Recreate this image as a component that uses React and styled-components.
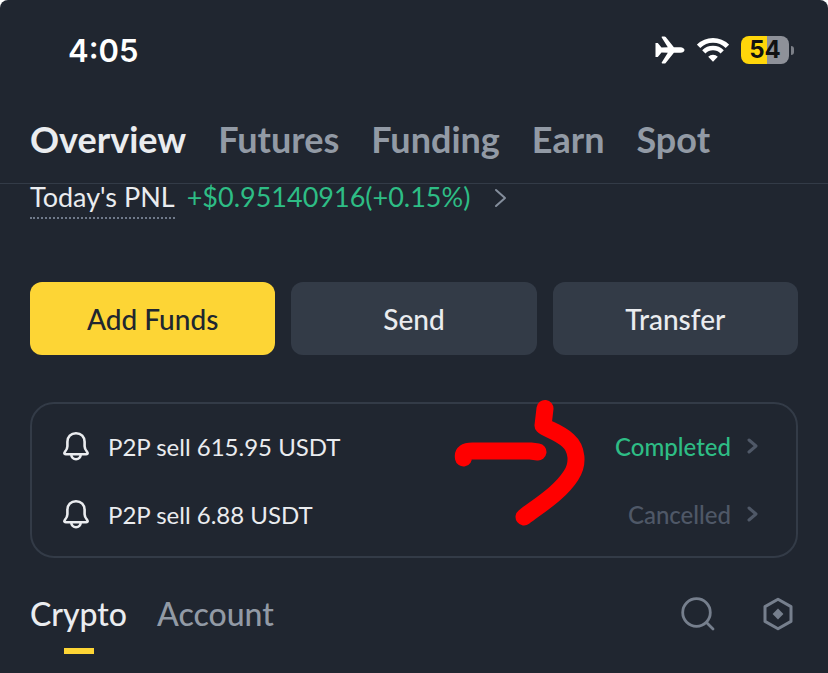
import React from 'react'
import styled, { createGlobalStyle } from 'styled-components'

const tabs = ['Overview', 'Futures', 'Funding', 'Earn', 'Spot']

const orders = [
	{ id: 1, title: 'P2P sell 615.95 USDT', status: 'Completed', done: true },
	{ id: 2, title: 'P2P sell 6.88 USDT', status: 'Cancelled', done: false },
]

const Chevron = ({ width, height, stroke }) => (
	<svg width={width} height={height} viewBox={`0 0 ${width} ${height}`} fill='none' aria-hidden='true'>
		<path
			d={`M2 2 L${width - 2} ${height / 2} L2 ${height - 2}`}
			stroke='currentColor'
			strokeWidth={stroke}
			strokeLinejoin='round'
			strokeLinecap='round'
		/>
	</svg>
)

const PlaneIcon = () => (
	<svg width='30' height='28' viewBox='0 0 30 28' fill='#fff' aria-hidden='true'>
		<path d='M.5 7h2.300l3.700 4.600 6.300-.4L6.700 1.400C6.500.9 6.800.5 7.300.5h2.200c.5 0 .9.2 1.200.6l8.200 10.100h6.600c2.200 0 4 1.500 4 2.800s-1.800 2.800-4 2.800h-6.600l-8.200 10.100c-.3.400-.7.600-1.200.6H7.300c-.5 0-.8-.4-.6-.9l6.100-9.800-6.300-.4L2.800 21H.5z' />
	</svg>
)

const WifiIcon = () => (
	<svg width='32' height='24' viewBox='0 0 32 24' fill='none' aria-hidden='true'>
		<path d='M1.6 8.4a20.4 20.4 0 0 1 28.8 0' stroke='#fff' strokeWidth='4.8' />
		<path d='M6.8 13.8a13 13 0 0 1 18.4 0' stroke='#fff' strokeWidth='4.6' />
		<path d='M11.2 18.800a6.8 6.8 0 0 1 9.6 0L16 23.800z' fill='#fff' />
	</svg>
)

const BellIcon = () => (
	<svg width='28' height='30' viewBox='0 0 28 30' fill='none' stroke='#eaecef' strokeWidth='2.6' aria-hidden='true'>
		<path d='M14 2.2c-5.2 0-8.600 3.600-8.600 8.600v4.400c0 2.200-.8 3.600-2.400 5.600-1 1.300-.9 2.500.7 2.500h20.600c1.600 0 1.700-1.200.7-2.500-1.600-2-2.400-3.400-2.400-5.600v-4.400c0-5-3.400-8.600-8.600-8.600z' strokeLinejoin='round' />
		<path d='M9.300 23.600a4.700 4.700 0 0 0 9.400 0' />
	</svg>
)

const SearchIcon = () => (
	<svg width='34' height='34' viewBox='0 0 34 34' fill='none' stroke='#767f8d' strokeWidth='2.8' aria-hidden='true'>
		<circle cx='15.5' cy='15.5' r='13.8' />
		<path d='M25.5 25.5L32 32' strokeLinecap='round' />
	</svg>
)

const HexIcon = () => (
	<svg width='30' height='34' viewBox='0 0 30 34' fill='none' aria-hidden='true'>
		<path d='M15 2.2L28 9.600v14.800L15 31.800 2 24.400V9.600z' stroke='#767f8d' strokeWidth='3' strokeLinejoin='round' />
		<path d='M15 11.600l5.400 5.400-5.400 5.400L9.600 17z' fill='#767f8d' />
	</svg>
)

const App = () => {
	return (
		<Page>
			<GlobalStyle />
			<Header>
				<StatusBar>
					<Time>4:05</Time>
					<StatusIcons>
						<PlaneIcon />
						<WifiIcon />
						<Battery>
							<BatteryBody>54</BatteryBody>
							<BatteryTip />
						</Battery>
					</StatusIcons>
				</StatusBar>
				<Nav>
					{tabs.map((tab) => (
						<NavTab key={tab} href='#' $active={tab === 'Overview'}>{tab}</NavTab>
					))}
				</Nav>
			</Header>

			<Main>
				<Pnl href='#'>
					<PnlLabel>Today's PNL</PnlLabel>
					<PnlValue>+$0.95140916(+0.15%)</PnlValue>
					<Chevron width={13} height={20} stroke={2} />
				</Pnl>

				<Actions>
					<ActionButton $primary>Add Funds</ActionButton>
					<ActionButton>Send</ActionButton>
					<ActionButton>Transfer</ActionButton>
				</Actions>

				<Card>
					{orders.map(({ id, title, status, done }) => (
						<Order key={id} href='#'>
							<BellIcon />
							<OrderTitle>{title}</OrderTitle>
							<OrderStatus $done={done}>{status}</OrderStatus>
							<Chevron width={11} height={16} stroke={3} />
						</Order>
					))}
					<Marker viewBox='0 0 132 128' aria-hidden='true'>
						<path d='M9.500 60c-1-5 2-7 9-7h58l7.500 1' />
						<path d='M91 10.500l-2 17c4 4 15 6 25 15 9 8 11 23 3 35-11 17-29 28-47 41.500' />
					</Marker>
				</Card>

				<Assets>
					<AssetTab $active>Crypto</AssetTab>
					<AssetTab>Account</AssetTab>
					<Tools>
						<IconButton aria-label='Search'><SearchIcon /></IconButton>
						<IconButton aria-label='Settings'><HexIcon /></IconButton>
					</Tools>
				</Assets>
			</Main>
		</Page>
	)
}

export default App

const GlobalStyle = createGlobalStyle`
	* {
		box-sizing: border-box;
	}

	body {
		margin: 0;
		background: #fff;
		font-family: Lato, 'Open Sans', sans-serif;
		color: #eaecef;
	}

	a {
		color: inherit;
		text-decoration: none;
	}

	button {
		padding: 0;
		border: none;
		background: none;
		font-family: inherit;
		color: inherit;
		cursor: pointer;
	}

	svg {
		display: block;
		flex-shrink: 0;
	}
`
const Page = styled.div`
	min-height: 100vh;
	border-radius: 8px 8px 0 0;
	background: #202630;
`
const Header = styled.header`
	border-bottom: 1px solid #333b47;
`
const StatusBar = styled.div`
	height: 100px;
	padding: 0 34px 0 68px;
	display: flex;
	align-items: center;
	justify-content: space-between;
`
const Time = styled.time`
	font-family: Inter, sans-serif;
	font-size: 31px;
	font-weight: 600;
	color: #fff;
`
const StatusIcons = styled.div`
	display: flex;
	align-items: center;
	gap: 12px;
`
const Battery = styled.div`
	display: flex;
	align-items: center;
	gap: 2px;
`
const BatteryBody = styled.span`
	width: 48px;
	height: 28px;
	border-radius: 8px;
	background: linear-gradient(90deg, #ffd60a 54%, #8e9199 54%);
	font-family: Inter, sans-serif;
	font-size: 24px;
	font-weight: 700;
	line-height: 28px;
	text-align: center;
	color: #111;
`
const BatteryTip = styled.span`
	width: 3px;
	height: 9px;
	border-radius: 0 4px 4px 0;
	background: #7b7f87;
`
const Nav = styled.nav`
	height: 83px;
	padding: 16px 30px 0;
	display: flex;
	align-items: flex-start;
	gap: 32px;
`
const NavTab = styled.a`
	font-size: 36px;
	font-weight: 700;
	line-height: 46px;
	color: ${({ $active }) => ($active ? '#eaecef' : '#929aa5')};
`
const Main = styled.main`
	padding: 0 30px;
`
const Pnl = styled.a`
	display: flex;
	align-items: flex-start;
	font-size: 27px;
	line-height: 26px;

	svg {
		margin: 4px 0 0 24px;
		color: #848e9c;
	}
`
const PnlLabel = styled.span`
	padding-bottom: 7px;
	border-bottom: 2px dotted #707a8a;
`
const PnlValue = styled.span`
	margin-left: 12px;
	color: #2ebd85;
`
const Actions = styled.div`
	margin-top: 63px;
	display: grid;
	grid-template-columns: repeat(3, 1fr);
	gap: 16px;
`
const ActionButton = styled.button`
	height: 73px;
	border-radius: 12px;
	background: ${({ $primary }) => ($primary ? '#fdd535' : '#333b47')};
	font-size: 28px;
	font-weight: 500;
	color: ${({ $primary }) => ($primary ? '#202630' : '#eaecef')};
`
const Card = styled.section`
	position: relative;
	margin-top: 47px;
	padding: 8px 38px 8px 30px;
	border: 2px solid #333b47;
	border-radius: 24px;
`
const Order = styled.a`
	height: 68px;
	display: flex;
	align-items: center;
`
const OrderTitle = styled.span`
	flex: 1;
	margin-left: 18px;
	font-size: 24px;
`
const OrderStatus = styled.span`
	font-size: 24px;
	font-weight: 500;
	color: ${({ $done }) => ($done ? '#2ebd85' : '#4f5867')};

	& + svg {
		margin-left: 16px;
		color: #4f5867;
	}
`
const Marker = styled.svg`
	position: absolute;
	top: -6px;
	right: 210px;
	width: 132px;
	height: 128px;
	overflow: visible;
	fill: none;
	stroke: #f00;
	stroke-width: 17px;
	stroke-linecap: round;
	stroke-linejoin: round;
	pointer-events: none;
`
const Assets = styled.div`
	margin-top: 32px;
	display: flex;
	align-items: flex-start;
	gap: 30px;
`
const AssetTab = styled.button`
	display: flex;
	flex-direction: column;
	align-items: center;
	gap: 10px;
	font-size: 32px;
	font-weight: 500;
	line-height: 48px;
	color: ${({ $active }) => ($active ? '#eaecef' : '#929aa5')};

	&::after {
		content: '';
		width: 30px;
		height: 6px;
		background: ${({ $active }) => ($active ? '#fdd535' : 'transparent')};
	}
`
const Tools = styled.div`
	margin-left: auto;
	padding-right: 5px;
	display: flex;
	gap: 48px;
`
const IconButton = styled.button`
	height: 48px;
	display: flex;
	align-items: center;
`
